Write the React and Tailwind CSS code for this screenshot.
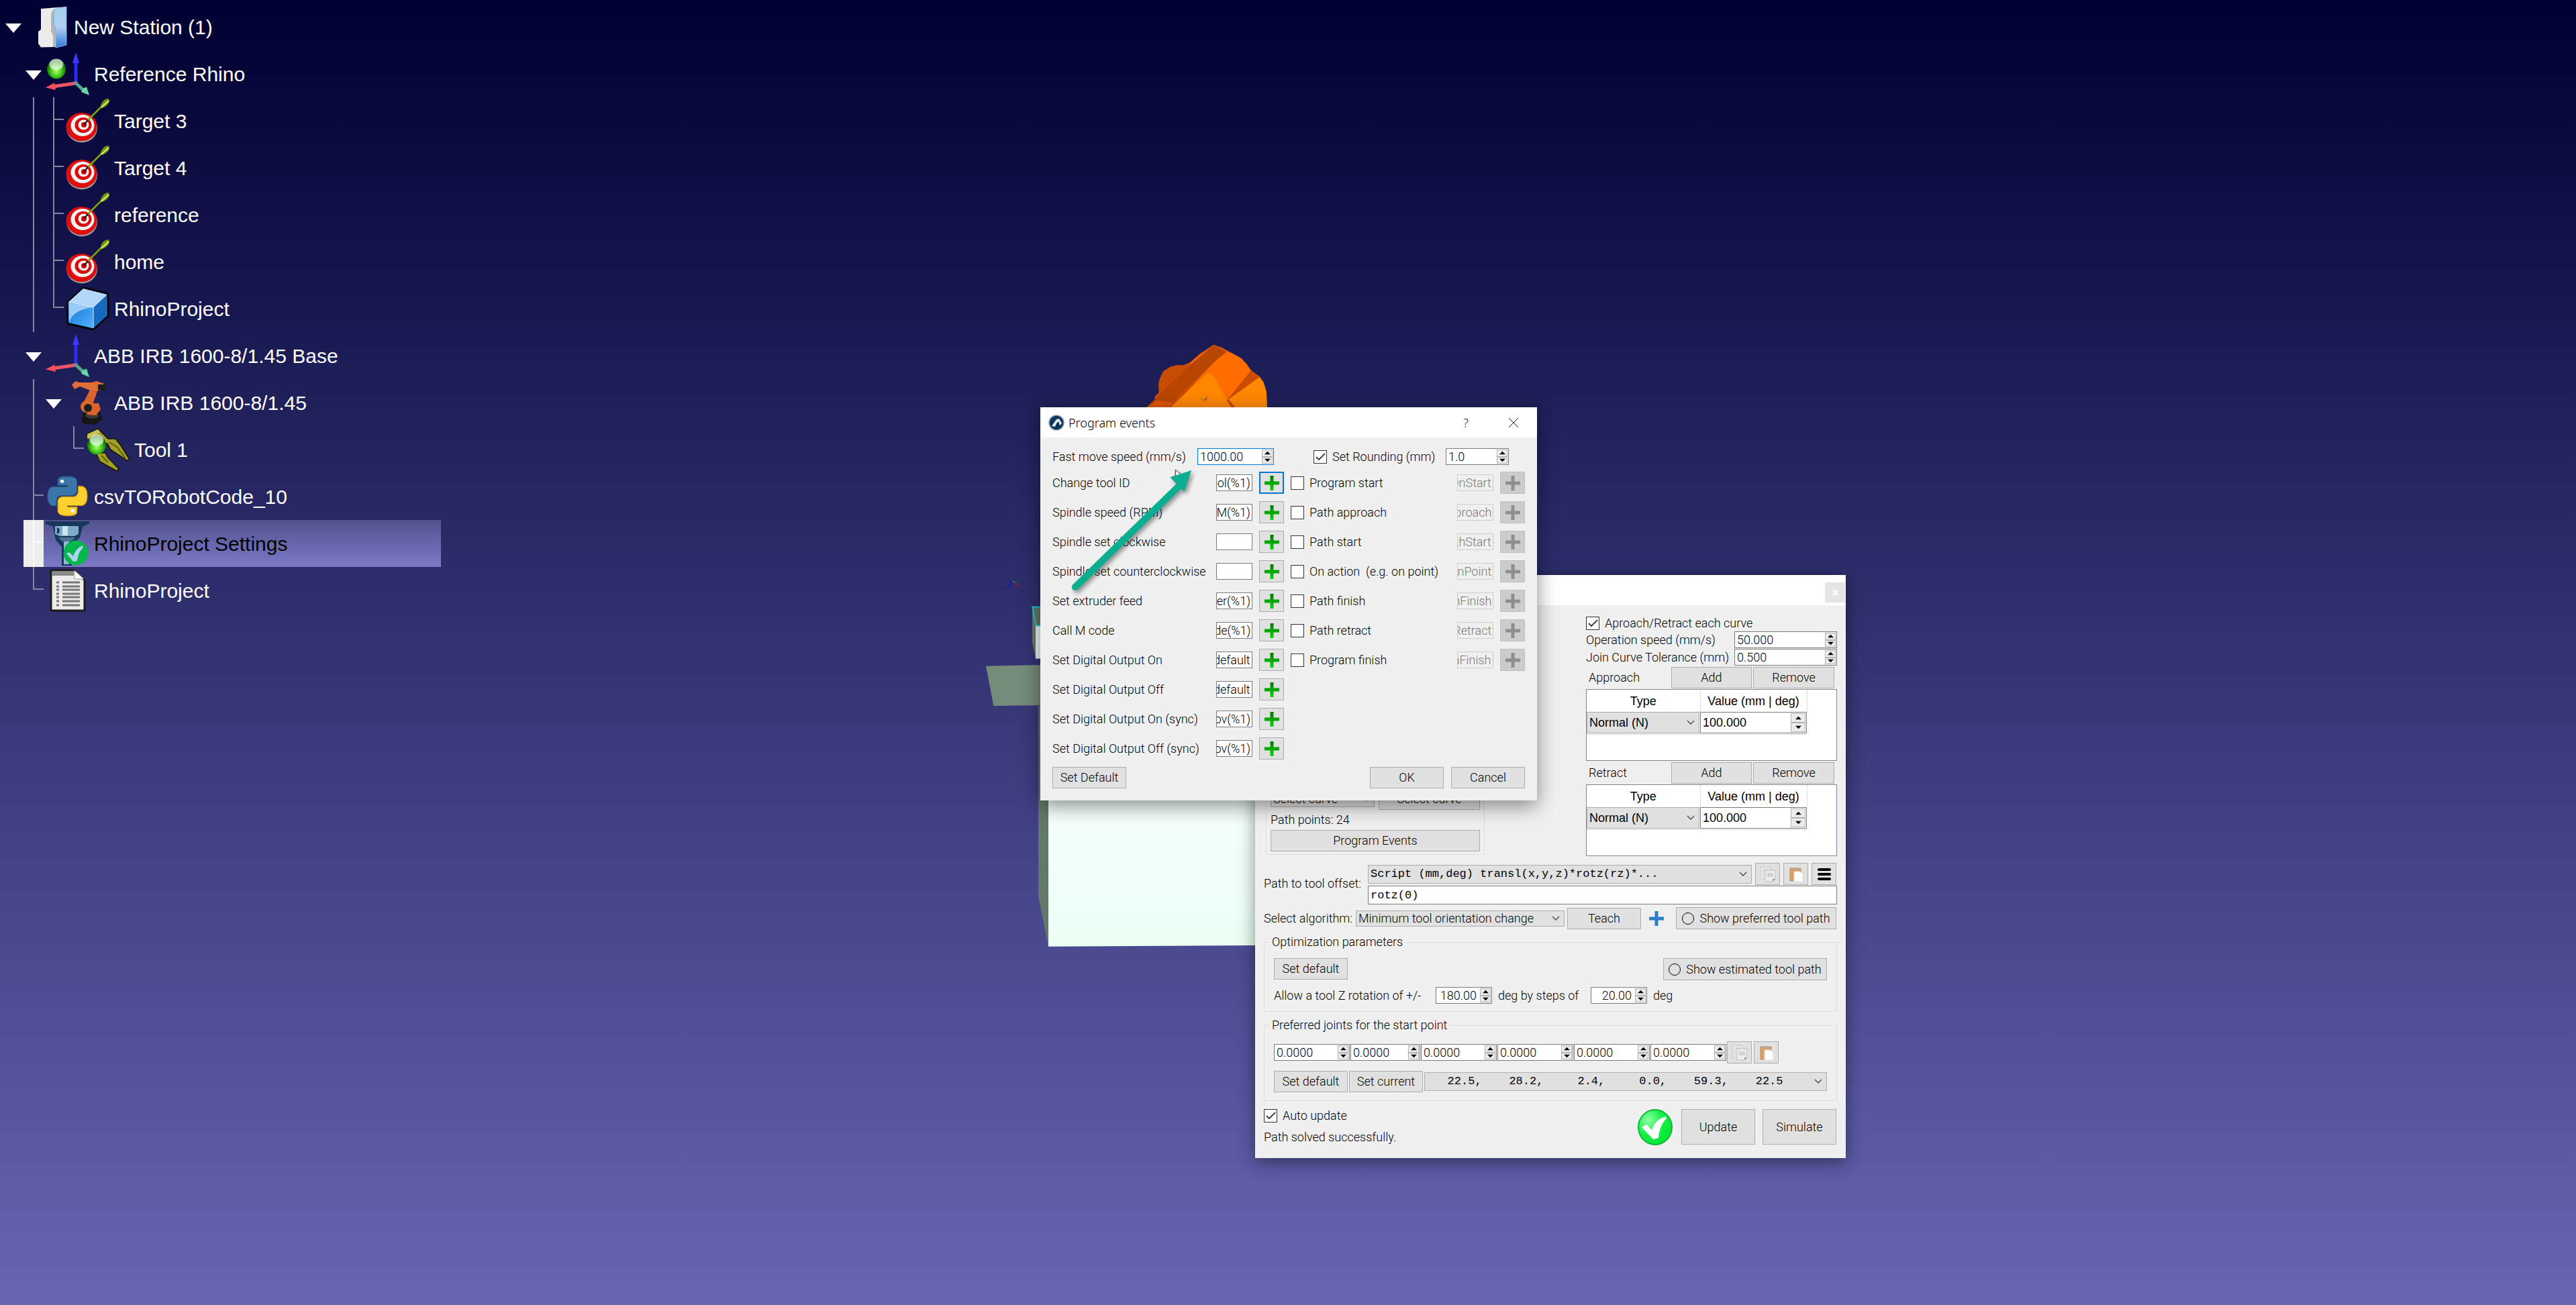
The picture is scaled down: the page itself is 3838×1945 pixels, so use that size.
import React from "react";
import { twMerge } from "tailwind-merge";

const cls = (...a) => twMerge(a.filter(Boolean).join(" "));

/* ---------- tree icons ---------- */

const Icon = ({ children }) => (
  <svg viewBox="0 0 66 66" className="mx-[2px] h-[66px] w-[66px] shrink-0" aria-hidden="true">{children}</svg>
);

const Ball = () => (
  <g>
    <ellipse cx="17" cy="26" rx="14" ry="14.5" fill="url(#ball)" />
    <ellipse cx="17" cy="19" rx="10.5" ry="8.5" fill="#fff" opacity=".65" />
  </g>
);

const StationIcon = () => (
  <Icon>
    <path d="M24 6 62 3 46 18V63L24 63.500 20 58V40L24 37Z" fill="#ececec" />
    <path d="M39 12 43 7 46 34 45 63 42 63V46L39 40Z" fill="#b5b5b5" />
    <path d="M43.500 7 62 3V60L46 64V34L43.500 31Z" fill="url(#folder)" stroke="#7fb2e0" />
  </Icon>
);

const FrameIcon = ({ ball }) => (
  <Icon>
    <path d="M46 47V14" stroke="#2b2bf5" strokeWidth="5" />
    <path d="M46 1 51 17H41Z" fill="#3b3bff" />
    <path d="M46 47 12 52" stroke="#f25565" strokeWidth="5" />
    <path d="M1 53.500 14 46.500 16 57Z" fill="#ff4f5f" />
    <path d="M46 47 58 58" stroke="#4aa888" strokeWidth="5" />
    <path d="M66 65 54 60 56 55 62 52.500Z" fill="#67d6ab" />
    <circle cx="46" cy="47" r="3" fill="#7488a0" />
    {ball && <Ball />}
  </Icon>
);

const TargetIcon = () => (
  <Icon>
    <ellipse cx="25" cy="44" rx="23" ry="21.500" fill="#9a9a9a" />
    <ellipse cx="24.500" cy="42" rx="23" ry="21" fill="#e00d0d" />
    <ellipse cx="26" cy="40" rx="17.500" ry="16" fill="#f0f0f0" />
    <ellipse cx="27" cy="39.500" rx="12.500" ry="11.500" fill="#d80c0c" />
    <ellipse cx="27.500" cy="39" rx="8" ry="7.500" fill="#f4f4f4" />
    <ellipse cx="28" cy="39" rx="4" ry="4" fill="#c00" />
    <path d="M28 39 36 30" stroke="#111" strokeWidth="2" />
    <path d="M34 32 58 8" stroke="#7fa50a" strokeWidth="2.500" />
    <path d="M52 15C53 6 58 0 65 0 68 7 62 12 52 15Z" fill="#6f9408" />
    <path d="M54 13 65 3" stroke="#e0ef80" strokeWidth="2" />
  </Icon>
);

const CubeIcon = () => (
  <Icon>
    <path d="M27 2 62 10 64 14V44L42 64 4 55V23Z" fill="#2b86e0" stroke="#000" strokeWidth="3" strokeLinejoin="round" />
    <path d="M27 3 62 12 42 31 5 23Z" fill="#b4d6fb" />
    <path d="M5 24 41 31V62L5 54Z" fill="url(#cube)" />
    <path d="M42 31 62 12 63 43 42 62Z" fill="#1769c0" />
    <path d="M5 24 41 31C20 34 9 42 6 54Z" fill="#b9dcff" opacity=".8" />
    <path d="M42 62V31L5 23M42 31 62 12" stroke="#e8f4ff" fill="none" />
  </Icon>
);

const RobotIcon = () => (
  <Icon>
    <path d="M27 47 52 47 56 58 44 66 26 64 24 58Z" fill="#161616" />
    <ellipse cx="40" cy="52" rx="10" ry="5" fill="#3a3a3a" />
    <path d="M38 12 49 13 41 36 27 34Z" fill="#d9642c" />
    <circle cx="32" cy="39" r="9" fill="#dd692f" />
    <path d="M30 34 50 34 53 43 46 52 33 51Z" fill="#d9642c" />
    <circle cx="34" cy="41" r="6" fill="#1c1c1c" />
    <path d="M10 6 16 1 21 3 40 3 47 1 58 5 52 15 38 15 22 9 14 13Z" fill="#e06d33" />
    <path d="M49 6 61 6 60 16 49 14Z" fill="#1d1d1d" />
  </Icon>
);

const ToolIcon = () => (
  <Icon>
    <path d="M2 10 19 2 34 17 45 17 53 27 66 48 62 49 38 33 33 24 20 24 4 18Z" fill="#a3a024" stroke="#161600" strokeWidth="1.500" />
    <path d="M16 38 30 38 33 44 50 62 47 65 22 51Z" fill="#a3a024" stroke="#161600" strokeWidth="1.500" />
    <path d="M36 22 48 30 60 46M24 42 34 52" stroke="#5d5c10" strokeWidth="2" fill="none" />
    <path d="M3 10 19 3 22 8 3 17Z" fill="#c8c557" />
    <Ball />
  </Icon>
);

const SNAKE =
  "M14.25.18l.9.2.73.26.59.3.45.32.34.34.25.34.16.33.1.3.04.26.02.2-.01.13V8.5l-.05.63-.13.55-.21.46-.26.38-.3.31-.33.25-.35.19-.35.14-.33.1-.3.07-.26.04-.21.02H8.77l-.69.05-.59.14-.5.22-.41.27-.33.32-.27.35-.2.36-.15.37-.1.35-.07.32-.04.27-.02.21v3.06H3.17l-.21-.03-.28-.07-.32-.12-.35-.18-.36-.26-.36-.36-.35-.46-.32-.59-.28-.73-.21-.88-.14-1.05-.05-1.23.06-1.22.16-1.04.24-.87.32-.71.36-.57.4-.44.42-.33.42-.24.4-.16.36-.1.32-.05.24-.01h.16l.06.01h8.16v-.83H6.18l-.01-2.75-.02-.37.05-.34.11-.31.17-.28.25-.26.31-.23.38-.2.44-.18.51-.15.58-.12.64-.1.71-.06.77-.04.84-.02 1.27.05z";

const PythonIcon = () => (
  <Icon>
    <g transform="translate(4 3) scale(2.450)">
      <path d={SNAKE} fill="#3b74a8" stroke="#245684" strokeWidth=".5" />
      <circle cx="8.800" cy="3" r="1.100" fill="#fff" />
      <g transform="rotate(180 12 12)">
        <path d={SNAKE} fill="#ffcf2e" stroke="#c79a16" strokeWidth=".5" />
        <circle cx="8.800" cy="3" r="1.100" fill="#fff" />
      </g>
    </g>
  </Icon>
);

const MillingIcon = () => (
  <Icon>
    <path d="M0 0H66V3L56 8 52 24 44 31 40 66H25V38L16 28 12 8 1 4Z" fill="#16365a" />
    <path d="M15 7H50V19L44 22H22L15 19Z" fill="#7fa9c9" />
    <path d="M26 7H34V21H26Z" fill="#cfe4f3" />
    <path d="M18 10C23 8 23 20 18 18Z" fill="#16365a" />
    <path d="M20 24H46L38 30H26Z" fill="#4a7595" />
    <path d="M28 30H36V64H28Z" fill="#93b9d4" />
    <ellipse cx="46" cy="47" rx="18.500" ry="18.500" fill="#02b84c" />
    <path d="M32 48 36 46 42 52C45 44 49 39 56 36L57 39C52 44 49 50 48 59L42 60Z" fill="#a9d3ee" />
  </Icon>
);

const DocIcon = () => (
  <Icon>
    <path d="M9 3H44L59 18V63H9Z" fill="#ebebeb" stroke="#1a1a1a" strokeWidth="3" strokeLinejoin="round" />
    <path d="M11 4H43V11H11Z" fill="#8b8b8b" />
    <path d="M44 3V16H58Z" fill="#fafafa" stroke="#9a9a9a" />
    <path d="M17 21H21M26 21H52M17 27H21M26 27H52M17 32H21M26 32H52M17 38H21M26 38H52M17 43H21M26 43H52M17 49H21M26 49H52M17 55H21M26 55H52" stroke="#777" strokeWidth="3" />
  </Icon>
);

/* ---------- station tree ---------- */

const TREE = [
  { label: "New Station (1)", guides: ["arrow"], icon: <StationIcon /> },
  { label: "Reference Rhino", guides: ["none", "arrow"], icon: <FrameIcon ball /> },
  { label: "Target 3", guides: ["none", "line", "tee"], icon: <TargetIcon /> },
  { label: "Target 4", guides: ["none", "line", "tee"], icon: <TargetIcon /> },
  { label: "reference", guides: ["none", "line", "tee"], icon: <TargetIcon /> },
  { label: "home", guides: ["none", "line", "tee"], icon: <TargetIcon /> },
  { label: "RhinoProject", guides: ["none", "line", "elbow"], icon: <CubeIcon /> },
  { label: "ABB IRB 1600-8/1.45 Base", guides: ["none", "arrow"], icon: <FrameIcon /> },
  { label: "ABB IRB 1600-8/1.45", guides: ["none", "line", "arrow"], icon: <RobotIcon /> },
  { label: "Tool 1", guides: ["none", "line", "none", "elbow"], icon: <ToolIcon /> },
  { label: "csvTORobotCode_10", guides: ["none", "tee"], icon: <PythonIcon /> },
  { label: "RhinoProject Settings", guides: ["none", "tee"], icon: <MillingIcon />, selected: true },
  { label: "RhinoProject", guides: ["none", "elbow"], icon: <DocIcon /> },
];

const GUIDE = {
  none: null,
  arrow: <path d="M3 30H27L15 44Z" fill="#fff" />,
  line: <path d="M15 0V70" stroke="#85859f" strokeWidth="2" />,
  tee: <path d="M15 0V70M15 33H30" stroke="#85859f" strokeWidth="2" />,
  elbow: <path d="M15 0V33H30" stroke="#85859f" strokeWidth="2" fill="none" />,
};

function StationTree() {
  return (
    <ul className="w-[657px] py-[5px] pl-[5px] font-['Liberation_Sans',sans-serif] text-[30px] leading-none text-white">
      {TREE.map((row, i) => (
        <li key={i} className="flex h-[70px]">
          {row.guides.map((g, j) => (
            <svg
              key={j}
              viewBox="0 0 30 70"
              className={cls("h-[70px] w-[30px] shrink-0", row.selected && j === row.guides.length - 1 && "bg-[#eeeeee]")}
              aria-hidden="true"
            >
              {row.selected && g === "tee" ? <path d="M15 0V70M15 33H30" stroke="#fafafa" strokeWidth="2" /> : GUIDE[g]}
            </svg>
          ))}
          <div className={cls("flex flex-1 items-center", row.selected && "bg-linear-to-b from-[#52528f] to-[#7b7bc8] text-black")}>
            {row.icon}
            <span className="ml-[5px] whitespace-nowrap pt-[2px]">{row.label}</span>
          </div>
        </li>
      ))}
    </ul>
  );
}

/* ---------- 3D view ---------- */

function Scene() {
  return (
    <svg viewBox="0 0 1380 2760" className="absolute left-[1460px] top-[500px] h-[920px] w-[460px]" aria-hidden="true">
      <path d="M745 321 785 291 780 275 800 255 798 215 805 190 820 160 850 140 880 132 910 133 940 120 985 80 1045 42 1080 55 1165 100 1190 125 1212 157 1250 183 1268 210 1280 250 1284 321Z" fill="#c84c02" />
      <path d="M1045 42 1080 55 1165 100 1190 125 1212 157 1104 290 1125 321H860L1055 110 985 115 930 130 985 85Z" fill="#ff6c00" />
      <path d="M1045 42 1105 72 1055 112 830 321H745L940 130Z" fill="#b84600" />
      <path d="M858 315 1020 165 1048 185 1104 290 1120 321H860Z" fill="#ff8700" />
      <path d="M1104 290 1250 186 1268 210 1280 250 1284 321H1130Z" fill="#ff8800" />
      <path d="M1212 157 1250 183 1104 290Z" fill="#cb4c00" />
      <path d="M745 321 790 290 860 300 850 321Z" fill="#dd5800" />
      <path d="M1104 290 1112 286 1140 321H1125Z" fill="#c24c04" />
      <circle cx="1003" cy="282" r="12" fill="none" stroke="#b85c10" strokeWidth="3" strokeDasharray="40 20" />
      <circle cx="1007" cy="285" r="4" fill="#5b5b6b" />

      <path d="M145 1097 120 1133" stroke="#1010d0" strokeWidth="4" />
      <path d="M145 1097 160 1107" stroke="#10a040" strokeWidth="4" />
      <path d="M158 1105 180 1122" stroke="#c01030" strokeWidth="4" />

      <path d="M234 1215H290V1296H249V1445L234 1370Z" fill="#66796c" />
      <path d="M249 1298H290V1445H249Z" fill="#eef4f6" />
      <path d="M290 1214H234L250 1297H290" fill="none" stroke="#10d8d8" strokeWidth="5" />
      <path d="M27 1478 290 1473V1654L61 1656Z" fill="#758c79" />
      <path d="M261 1655H306V2732L261 2507Z" fill="#63776a" />
      <path d="M306 2040H1380V2726L306 2732Z" fill="url(#table)" />
    </svg>
  );
}

/* ---------- form controls ---------- */

const BTN = "inline-flex items-center justify-center border border-[#adadad] bg-[#e1e1e1] whitespace-nowrap";

const Btn = ({ className, children, ...rest }) => (
  <button type="button" className={cls(BTN, className)} {...rest}>{children}</button>
);

function Spin({ label, value, className, focused, right, wide, id }) {
  return (
    <div className={cls("flex h-[25px] items-stretch border bg-white", focused ? "border-[#0078d7]" : "border-[#7a7a7a]", className)}>
      <input
        id={id}
        aria-label={label}
        defaultValue={value}
        className={cls("w-0 min-w-0 flex-1 bg-transparent pl-[3px] outline-none", right && "pr-[5px] text-right")}
      />
      <div className={cls("my-px mr-px flex flex-col", wide ? "w-[22px]" : "w-[16px]")}>
        {["M6 2 11 7H1Z", "M1 2H11L6 7Z"].map((d, i) => (
          <button key={d} type="button" aria-label={i ? "Decrease" : "Increase"} className="flex flex-1 items-center justify-center border border-[#b4b4b4] bg-[#ececec]">
            <svg viewBox="0 0 12 9" className="h-[8px] w-[11px]"><path d={d} fill="#000" /></svg>
          </button>
        ))}
      </div>
    </div>
  );
}

function Check({ label, checked, className }) {
  return (
    <label className={cls("flex items-center gap-2 whitespace-nowrap", className)}>
      <span className="relative h-[20px] w-[20px] shrink-0">
        <input type="checkbox" defaultChecked={checked} className="peer block h-[20px] w-[20px] appearance-none border border-[#333] bg-white" />
        <svg viewBox="0 0 20 20" className="pointer-events-none absolute inset-0 hidden peer-checked:block">
          <path d="M4 10 8 14 17 5" fill="none" stroke="#444" strokeWidth="2" />
        </svg>
      </span>
      {label}
    </label>
  );
}

function Combo({ label, value, className, mono, id }) {
  return (
    <div className={cls("relative", className)}>
      <select id={id} aria-label={label} className={cls("block h-full w-full appearance-none border border-[#adadad] bg-[#e1e1e1] pl-[3px]", mono && "font-['Liberation_Mono',monospace] text-[17px]")}>
        <option>{value}</option>
      </select>
      <svg viewBox="0 0 12 8" className="pointer-events-none absolute right-[7px] top-1/2 h-[8px] w-[12px] -translate-y-1/2">
        <path d="M1 1 6 6 11 1" fill="none" stroke="#444" strokeWidth="1.300" />
      </svg>
    </div>
  );
}

const Plus = ({ fill }) => (
  <svg viewBox="0 0 22 22" className="h-[22px] w-[22px] shrink-0"><path d="M8.500 0H13.500V8.500H22V13.500H13.500V22H8.500V13.500H0V8.500H8.500Z" fill={fill} /></svg>
);

const CopyIcon = () => (
  <svg viewBox="0 0 24 24" className="h-[24px] w-[24px]">
    <path d="M1 1H16V19H1Z" fill="#e9e9e9" stroke="#c8c8c8" />
    <path d="M4 5H12M4 8H7M4 11H7M4 14H7" stroke="#c9c9c9" />
    <path d="M8 6H23V19L19 23H8Z" fill="#ececec" stroke="#bdbdbd" />
    <path d="M11 10H20V16H11Z" fill="#d2d2d2" />
    <path d="M19 23V19H23Z" fill="#8d8d8d" />
  </svg>
);

const PasteIcon = () => (
  <svg viewBox="0 0 24 24" className="h-[24px] w-[24px]">
    <path d="M3 3H19V22H3Z" fill="#d9a165" stroke="#c68a4c" />
    <path d="M7 4C7 1 15 1 15 4V5H7Z" fill="#a8adb3" />
    <path d="M9 8H18L22 12V23H9Z" fill="#fff" stroke="#ddd" />
  </svg>
);

const Ring = () => (
  <svg viewBox="0 0 18 18" className="h-[18px] w-[18px]" aria-hidden="true"><circle cx="9" cy="9" r="8.500" fill="none" stroke="#000" /></svg>
);

const TOOL_BTN = "h-[33px] w-[37px] shrink-0";

/* ---------- windows ---------- */

function OffsetTable({ title }) {
  return (
    <>
      <div className="flex items-center pr-1">
        <span className="flex-1 pl-1">{title}</span>
        <Btn className="h-[32px] w-[120px]">Add</Btn>
        <Btn className="ml-[2px] h-[32px] w-[121px]">Remove</Btn>
      </div>
      <div className="mb-[2px] mt-px h-[107px] border border-[#828790] bg-white font-['Liberation_Sans',sans-serif]">
        <table className="border-collapse">
          <thead>
            <tr className="h-[33px]">
              <th className="w-[169px] border-r border-[#e0e0e0] p-0 font-normal">Type</th>
              <th className="w-[159px] border-r border-[#e0e0e0] p-0 font-normal">Value (mm | deg)</th>
            </tr>
          </thead>
          <tbody>
            <tr className="h-[33px] border-b border-[#d8d8d8]">
              <td className="p-0 pr-px"><Combo label={`${title} type`} value="Normal (N)" className="h-[32px]" /></td>
              <td className="p-0"><Spin label={`${title} value`} value="100.000" wide className="h-[32px]" /></td>
            </tr>
          </tbody>
        </table>
      </div>
    </>
  );
}

const JOINT_WIDTHS = ["w-[113px]", "w-[104px]", "w-[113px]", "w-[113px]", "w-[113px]", "w-[113px]"];
const JOINTS = "   22.5,    28.2,     2.4,     0.0,    59.3,    22.5".replace(/ /g, "\u00a0");

function SettingsWindow() {
  return (
    <section className="absolute left-[1870px] top-[857px] w-[880px] bg-[#f0f0f0] shadow-[0_6px_24px_rgba(0,0,0,0.45)]">
      <header className="flex h-[45px] items-center justify-end bg-white pr-px pt-[7px]">
        <button type="button" aria-label="Close settings" className="flex h-[30px] w-[30px] items-center justify-center bg-[#e5e5e5]">
          <svg viewBox="0 0 10 10" className="h-[9px] w-[9px]"><path d="M1 1 9 9M9 1 1 9" stroke="#fff" strokeWidth="2.500" /></svg>
        </button>
      </header>

      <div className="px-[13px] pb-[19px] pt-[17px]">
        <div className="flex items-stretch justify-between">
          <div className="mb-1 ml-[3px] flex w-[326px] flex-col justify-end border border-[#dcdcdc] px-[6px] pb-[4px]">
            <div className="flex items-center gap-[6px]">
              <Combo label="Curve selection" value="Select curve" className="h-[24px] w-[155px]" />
              <Btn className="h-[32px] flex-1">Select curve</Btn>
            </div>
            <p className="my-[4px]">Path points: 24</p>
            <Btn className="h-[32px]">Program Events</Btn>
          </div>

          <div className="flex w-[374px] flex-col">
            <Check label="Aproach/Retract each curve" checked className="h-[22px] pb-[2px]" />
            <div className="flex items-center justify-between">
              <label htmlFor="op-speed">Operation speed (mm/s)</label>
              <Spin id="op-speed" value="50.000" className="w-[153px]" />
            </div>
            <div className="mb-[2px] mt-px flex items-center justify-between">
              <label htmlFor="join-tol" className="whitespace-nowrap">Join Curve Tolerance (mm)</label>
              <Spin id="join-tol" value="0.500" className="w-[153px]" />
            </div>
            <OffsetTable title="Approach" />
            <OffsetTable title="Retract" />
          </div>
        </div>

        <div className="mt-2 flex items-center">
          <label htmlFor="offset" className="w-[155px] whitespace-nowrap">Path to tool offset:</label>
          <div className="flex-1">
            <div className="flex items-center gap-[5px] pr-px">
              <Combo id="offset" mono value="Script (mm,deg) transl(x,y,z)*rotz(rz)*..." className="h-[28px] flex-1" />
              <Btn className={TOOL_BTN} aria-label="Copy offset"><CopyIcon /></Btn>
              <Btn className={TOOL_BTN} aria-label="Paste offset"><PasteIcon /></Btn>
              <Btn className={TOOL_BTN} aria-label="Offset menu">
                <svg viewBox="0 0 20 18" className="h-[18px] w-[20px]"><path d="M2 2H18M2 9H18M2 16H18" stroke="#000" strokeWidth="4" strokeLinecap="round" /></svg>
              </Btn>
            </div>
            <input aria-label="Offset script" defaultValue="rotz(0)" className="mt-px block h-[28px] w-full border border-[#7a7a7a] bg-white pl-[3px] font-['Liberation_Mono',monospace] text-[17px]" />
          </div>
        </div>

        <div className="mt-1 flex items-center pr-px">
          <label htmlFor="algorithm" className="w-[137px] whitespace-nowrap">Select algorithm:</label>
          <Combo id="algorithm" value="Minimum tool orientation change" className="h-[24px] w-[311px]" />
          <Btn className="ml-1 h-[32px] w-[110px]">Teach</Btn>
          <button type="button" aria-label="Add preferred path" className="ml-[12px]"><Plus fill="#2f7fc8" /></button>
          <Btn className="ml-auto h-[33px] w-[239px] gap-2">
            <Ring />Show preferred tool path
          </Btn>
        </div>

        <fieldset className="mt-2 border border-[#dcdcdc] px-[14px] pb-[11px] pt-[13px]">
          <legend className="-ml-[7px] px-1 leading-[22px]">Optimization parameters</legend>
          <div className="flex items-start justify-between">
            <Btn className="h-[32px] w-[110px]">Set default</Btn>
            <Btn className="h-[33px] w-[244px] gap-2"><Ring />Show estimated tool path</Btn>
          </div>
          <div className="mt-[10px] flex items-center">
            <label htmlFor="rotation" className="w-[241px] whitespace-nowrap">Allow a tool Z rotation of +/-</label>
            <Spin id="rotation" value="180.00" right className="w-[84px]" />
            <label htmlFor="steps" className="w-[147px] whitespace-nowrap pl-[9px]">deg by steps of</label>
            <Spin id="steps" value="20.00" right className="w-[84px]" />
            <span className="ml-[9px]">deg</span>
          </div>
        </fieldset>

        <fieldset className="mt-[9px] border border-[#dcdcdc] px-[14px] pb-[12px] pt-[13px]">
          <legend className="-ml-[7px] px-1 leading-[22px]">Preferred joints for the start point</legend>
          <div className="flex items-center gap-px">
            {JOINT_WIDTHS.map((w, i) => (
              <Spin key={i} label={`Joint ${i + 1}`} value="0.0000" className={w} />
            ))}
            <Btn className={cls(TOOL_BTN, "mr-[2px]")} aria-label="Copy joints"><CopyIcon /></Btn>
            <Btn className={TOOL_BTN} aria-label="Paste joints"><PasteIcon /></Btn>
          </div>
          <div className="mt-[11px] flex items-center gap-[2px]">
            <Btn className="h-[32px] w-[110px]">Set default</Btn>
            <Btn className="h-[32px] w-[110px]">Set current</Btn>
            <Combo label="Joint solution" mono value={JOINTS} className="h-[28px] flex-1" />
          </div>
        </fieldset>

        <footer className="mt-[12px] flex items-start pr-px">
          <div className="flex-1">
            <Check label="Auto update" checked className="h-[20px]" />
            <p className="mt-[11px]">Path solved successfully.</p>
          </div>
          <svg viewBox="0 0 52 54" className="mr-[13px] h-[54px] w-[52px]" aria-hidden="true">
            <ellipse cx="26" cy="27" rx="25" ry="26" fill="url(#ok)" stroke="#0cb638" strokeWidth="2" />
            <path d="M6 27 13 23 21 31C25 20 31 14 42 11L43 14C36 20 32 31 31 43L23 45Z" fill="#fff" />
          </svg>
          <Btn className="h-[53px] w-[110px]">Update</Btn>
          <Btn className="ml-[11px] h-[53px] w-[110px]">Simulate</Btn>
        </footer>
      </div>
    </section>
  );
}

const EVENTS = [
  ["Change tool ID", "SetTool(%1)"],
  ["Spindle speed (RPM)", "SpindleRPM(%1)"],
  ["Spindle set clockwise", ""],
  ["Spindle set counterclockwise", ""],
  ["Set extruder feed", "Extruder(%1)"],
  ["Call M code", "M_Code(%1)"],
  ["Set Digital Output On", "default"],
  ["Set Digital Output Off", "default"],
  ["Set Digital Output On (sync)", "Mov(%1)"],
  ["Set Digital Output Off (sync)", "Mov(%1)"],
];

const CALLS = [
  ["Program start", "ProgramOnStart"],
  ["Path approach", "PathApproach"],
  ["Path start", "PathStart"],
  ["On action  (e.g. on point)", "PathOnPoint"],
  ["Path finish", "PathFinish"],
  ["Path retract", "PathRetract"],
  ["Program finish", "ProgramFinish"],
];

// long values stay scrolled to their end, so the tail is what shows
const scrollToEnd = (el) => {
  if (el) el.scrollLeft = el.scrollWidth;
};

function EventRow({ label, value, index }) {
  return (
    <div className="flex h-[33px] items-center">
      <label htmlFor={`event-${index}`} className="flex-1 whitespace-nowrap">{label}</label>
      <input id={`event-${index}`} ref={scrollToEnd} defaultValue={value} className="h-[25px] w-[54px] border border-[#7a7a7a] bg-white pr-[2px]" />
      <Btn className={cls(TOOL_BTN, "ml-[10px]", index === 0 && "border-2 border-[#0078d7]")} aria-label={`Insert ${label}`}>
        <Plus fill="url(#plus)" />
      </Btn>
    </div>
  );
}

function CallRow({ label, value }) {
  return (
    <div className="flex h-[33px] items-center">
      <Check label={label} className="flex-1 whitespace-pre" />
      <input aria-label={`${label} call`} ref={scrollToEnd} readOnly defaultValue={value} className="h-[25px] w-[54px] border border-[#cccccc] bg-[#f0f0f0] pr-[2px] text-[#787878]" />
      <Btn className={cls(TOOL_BTN, "ml-[10px] border-[#bfbfbf] bg-[#cccccc]")} disabled aria-label={`Insert ${label}`}>
        <Plus fill="#8e8e8e" />
      </Btn>
    </div>
  );
}

function EventsDialog() {
  return (
    <section role="dialog" aria-labelledby="events-title" className="absolute left-[1550px] top-[607px] w-[740px] bg-[#f0f0f0] shadow-[0_8px_28px_rgba(0,0,0,0.45)]">
      <header className="flex h-[45px] items-center bg-white pl-3">
        <svg viewBox="0 0 24 24" className="h-[24px] w-[24px]" aria-hidden="true">
          <circle cx="12" cy="12" r="11" fill="#0d3557" stroke="#8ba2b8" strokeWidth="1.500" />
          <path d="M5 17 12 7 16 6 20 13 17 16 15 10 12 13 10 18Z" fill="#e8eef3" />
        </svg>
        <h1 id="events-title" className="ml-[6px] flex-1 font-['Noto_Sans',sans-serif]">Program events</h1>
        <button type="button" className="w-[70px] font-['Noto_Sans',sans-serif] text-[#222]">?</button>
        <button type="button" aria-label="Close" className="flex w-[71px] justify-center">
          <svg viewBox="0 0 16 16" className="h-[16px] w-[16px]"><path d="M1 1 15 15M15 1 1 15" stroke="#222" /></svg>
        </button>
      </header>

      <div className="px-[18px] pb-[18px] pt-[16px]">
        <div className="flex items-center">
          <label htmlFor="fast-speed" className="w-[216px] whitespace-nowrap">Fast move speed (mm/s)</label>
          <Spin id="fast-speed" value="1000.00" focused className="w-[114px]" />
          <Check label="Set Rounding (mm)" checked className="ml-[59px] w-[197px]" />
          <Spin label="Rounding" value="1.0" className="w-[94px]" />
        </div>

        <div className="mt-[10px] flex items-start gap-[10px]">
          <div className="flex w-[345px] flex-col gap-[11px]">
            {EVENTS.map(([label, value], i) => <EventRow key={label} label={label} value={value} index={i} />)}
          </div>
          <div className="flex flex-1 flex-col gap-[11px]">
            {CALLS.map(([label, value]) => <CallRow key={label} label={label} value={value} />)}
          </div>
        </div>

        <div className="mt-[11px] flex gap-[11px]">
          <Btn className="mr-auto h-[32px] w-[110px]">Set Default</Btn>
          <Btn className="h-[32px] w-[110px]">OK</Btn>
          <Btn className="h-[32px] w-[110px]">Cancel</Btn>
        </div>
      </div>
    </section>
  );
}

// green annotation arrow and the mouse pointer, above every window
function Pointer() {
  return (
    <svg viewBox="0 0 600 600" className="pointer-events-none absolute left-[1590px] top-[690px] h-[200px] w-[200px] drop-shadow-[3px_4px_3px_rgba(0,0,0,0.4)]" aria-hidden="true">
      <path d="M484 31V75L508 50Z" fill="#fff" stroke="#223" strokeWidth="3" />
      <path d="M36 555 505 98" stroke="#0bae90" strokeWidth="31" strokeLinecap="round" />
      <path d="M555 33 524 128 497 101 460 64Z" fill="#0bae90" />
    </svg>
  );
}

const Gradients = () => (
  <svg className="absolute h-0 w-0" aria-hidden="true">
    <defs>
      <radialGradient id="ball" cx=".5" cy=".6"><stop offset="0" stopColor="#b8ff70" /><stop offset=".6" stopColor="#3fc81c" /><stop offset="1" stopColor="#136d08" /></radialGradient>
      <linearGradient id="folder" x1="0" y1="0" x2="0" y2="1"><stop offset="0" stopColor="#a8d2ec" /><stop offset=".5" stopColor="#b0d0f0" /><stop offset="1" stopColor="#3478dc" /></linearGradient>
      <linearGradient id="cube" x1="0" y1="0" x2="1" y2="1"><stop offset="0" stopColor="#1976d2" /><stop offset="1" stopColor="#4fb0ff" /></linearGradient>
      <linearGradient id="table" x1="0" y1="0" x2="0" y2="1"><stop offset="0" stopColor="#f4fffe" /><stop offset="1" stopColor="#ecfff3" /></linearGradient>
      <linearGradient id="plus" x1="0" y1="0" x2="0" y2="1"><stop offset="0" stopColor="#047a04" /><stop offset="1" stopColor="#06d406" /></linearGradient>
      <radialGradient id="ok" cx=".3" cy=".3" r=".7"><stop offset="0" stopColor="#8dffa4" /><stop offset=".6" stopColor="#14f048" /><stop offset="1" stopColor="#06ea34" /></radialGradient>
    </defs>
  </svg>
);

export default function App() {
  return (
    <main className="relative min-h-screen overflow-hidden bg-linear-to-b/srgb from-[#000032] to-[#6666b4] font-[Roboto,sans-serif] text-[18px] font-light leading-[22px] text-black">
      <Gradients />
      <Scene />
      <StationTree />
      <SettingsWindow />
      <EventsDialog />
      <Pointer />
    </main>
  );
}
